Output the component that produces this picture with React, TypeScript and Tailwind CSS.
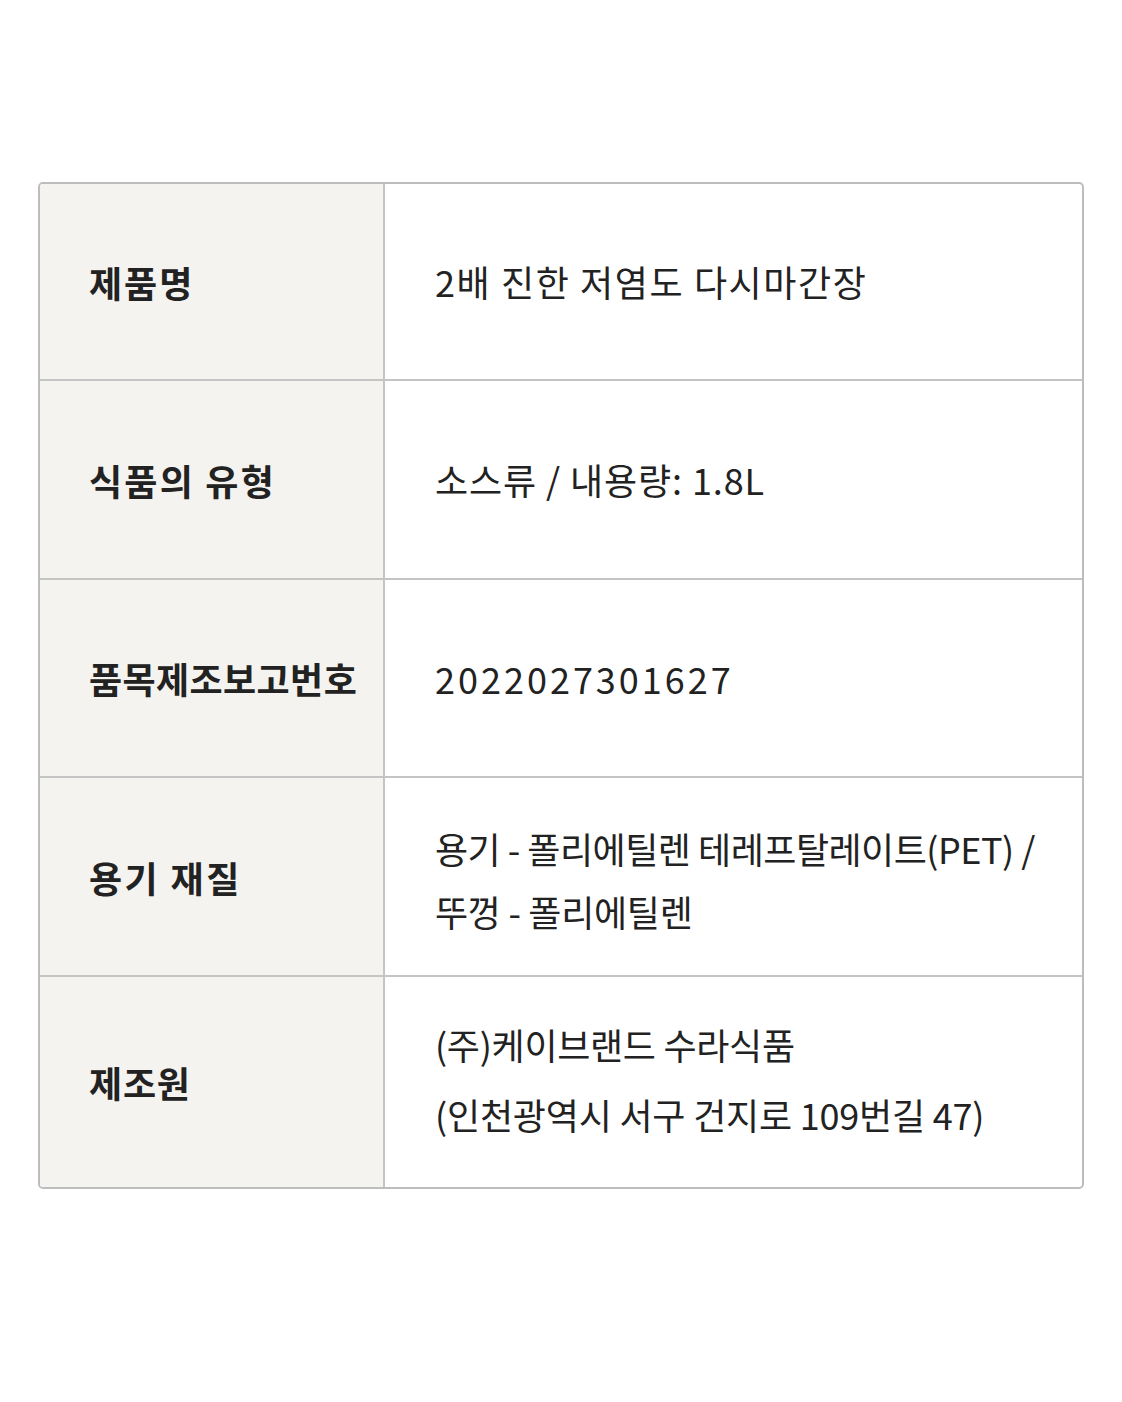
import React from "react";

type Line = { t: string; ls: string };
type Row = { label: string; lls: string; lines: Line[]; h: string; lh: string; pad: string };

const rows: Row[] = [
  {
    label: "제품명",
    lls: "tracking-[2px]",
    lines: [{ t: "2배 진한 저염도 다시마간장", ls: "tracking-[1.6px]" }],
    h: "h-[197px]",
    lh: "leading-[63px]",
    pad: "",
  },
  {
    label: "식품의 유형",
    lls: "tracking-[2.2px]",
    lines: [{ t: "소스류 / 내용량: 1.8L", ls: "tracking-[0.9px]" }],
    h: "h-[199px]",
    lh: "leading-[63px]",
    pad: "",
  },
  {
    label: "품목제조보고번호",
    lls: "tracking-[0.4px]",
    lines: [{ t: "2022027301627", ls: "tracking-[3px]" }],
    h: "h-[198px]",
    lh: "leading-[63px]",
    pad: "",
  },
  {
    label: "용기 재질",
    lls: "tracking-[2.4px]",
    lines: [
      { t: "용기 - 폴리에틸렌 테레프탈레이트(PET) /", ls: "tracking-[-0.5px]" },
      { t: "뚜껑 - 폴리에틸렌", ls: "tracking-[-0.3px]" },
    ],
    h: "h-[199px]",
    lh: "leading-[63px]",
    pad: "pt-[7px]",
  },
  {
    label: "제조원",
    lls: "tracking-[0.8px]",
    lines: [
      { t: "(주)케이브랜드 수라식품", ls: "tracking-[-0.3px]" },
      { t: "(인천광역시 서구 건지로 109번길 47)", ls: "tracking-[-0.2px]" },
    ],
    h: "h-[210px]",
    lh: "leading-[70px]",
    pad: "pb-[6px]",
  },
];

export default function App() {
  return (
    <div
      className="min-h-[1402px] w-full bg-white pt-[182px] px-[38px]"
      style={{ fontFamily: '"Noto Sans CJK KR", "Noto Sans", sans-serif' }}
    >
      <div className="w-[1046px] rounded-[5px] border-2 border-[#bdbdbd] overflow-hidden">
        {rows.map((r, i) => (
          <div
            key={i}
            className={`grid grid-cols-[345px_1fr] ${r.h} ${i < rows.length - 1 ? "border-b-2 border-[#c4c4c4]" : ""}`}
          >
            <div className="bg-[#f4f3f0] border-r-2 border-[#c4c4c4] flex items-center pl-[49px]">
              <span className={`text-[36px] font-bold text-[#222222] ${r.lls}`}>{r.label}</span>
            </div>
            <div className={`flex flex-col justify-center pl-[50px] pr-[20px] ${r.pad}`}>
              {r.lines.map((l, j) => (
                <div key={j} className={`text-[36px] text-[#222222] whitespace-nowrap ${r.lh} ${l.ls}`}>
                  {l.t}
                </div>
              ))}
            </div>
          </div>
        ))}
      </div>
    </div>
  );
}
